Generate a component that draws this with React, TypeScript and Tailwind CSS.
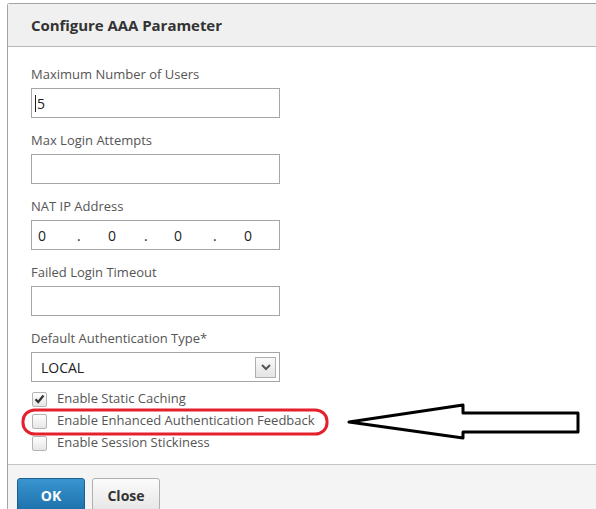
import React from 'react';

const font = { fontFamily: '"Open Sans", "Noto Sans", sans-serif' };

const Field: React.FC<{ label: string; children?: React.ReactNode; first?: boolean }> = ({ label, children, first }) => (
  <div className={first ? '' : 'mt-[12px]'}>
    <div className="h-[20px] leading-[20px] text-[13px] text-[#555]">{label}</div>
    <div className="mt-[4px] h-[30px] w-[249px] border border-[#a6a6a6] bg-white flex items-center text-[14px] text-[#222]">
      {children}
    </div>
  </div>
);

const CheckRow: React.FC<{ label: string; checked?: boolean }> = ({ label, checked }) => (
  <div className="flex items-center h-[22px]">
    <div className="ml-[1px] w-[15px] h-[15px] rounded-[2px] border border-[#b4b4b4] bg-gradient-to-b from-white to-[#e6e6e6] flex items-center justify-center">
      {checked && (
        <svg width="11" height="10" viewBox="0 0 11 10">
          <path d="M1.5 5.2 L4.2 8 L9.5 1.5" fill="none" stroke="#333" strokeWidth="2.2" />
        </svg>
      )}
    </div>
    <span className="ml-[10px] text-[13px] text-[#555]">{label}</span>
  </div>
);

export default function App() {
  return (
    <div className="relative w-[596px] h-[509px] overflow-hidden bg-white" style={font}>
      <div className="ml-[7px] mt-[3px] w-[620px] h-[540px] border-l border-t border-[#a3a3a3] rounded-tl-[3px] flex flex-col">
        {/* Header */}
        <div className="h-[43px] bg-[#f0f0f0] border-b border-[#b8b8b8] flex items-center pl-[23px]">
          <span className="text-[15px] font-bold tracking-[-0.05px] text-[#333]">Configure AAA Parameter</span>
        </div>

        {/* Body */}
        <div className="pl-[23px] pt-[17px] pb-[10px]">
          <Field label="Maximum Number of Users" first>
            <span className="ml-[3px] w-px h-[17px] bg-[#222]" />
            <span className="ml-[1px]">5</span>
          </Field>
          <Field label="Max Login Attempts" />
          <Field label="NAT IP Address">
            <span className="pl-[6px] w-[45px]">0</span>
            <span className="w-[31px]">.</span>
            <span className="w-[36px]">0</span>
            <span className="w-[30px]">.</span>
            <span className="w-[39px]">0</span>
            <span className="w-[31px]">.</span>
            <span>0</span>
          </Field>
          <Field label="Failed Login Timeout" />
          <Field label="Default Authentication Type*">
            <span className="ml-[9px] flex-1">LOCAL</span>
            <div className="mr-[3px] w-[21px] h-[21px] border border-[#b0b0b0] bg-gradient-to-b from-[#fafafa] to-[#e4e4e4] flex items-center justify-center">
              <svg width="10" height="7" viewBox="0 0 10 7">
                <path d="M1 1 L5 5 L9 1" fill="none" stroke="#555" strokeWidth="2" />
              </svg>
            </div>
          </Field>
          <div className="mt-[6px]">
            <CheckRow label="Enable Static Caching" checked />
            <CheckRow label="Enable Enhanced Authentication Feedback" />
            <CheckRow label="Enable Session Stickiness" />
          </div>
        </div>

        {/* Footer */}
        <div className="flex-1 border-t border-[#c4c4c4] bg-[#f4f4f4] pl-[9px] pt-[13px] flex gap-[7px] items-start">
          <button className="w-[68px] h-[34px] rounded-[3px] border border-[#1d5f8e] bg-gradient-to-b from-[#3a95d0] to-[#1c71ab] text-white text-[14px] font-bold">
            OK
          </button>
          <button className="w-[68px] h-[34px] rounded-[3px] border border-[#b0b0b0] bg-gradient-to-b from-[#fbfbfb] to-[#e6e6e6] text-[#333] text-[14px] font-bold">
            Close
          </button>
        </div>
      </div>

      {/* Annotation overlay */}
      <svg className="absolute left-0 top-0 pointer-events-none" width="596" height="509" viewBox="0 0 596 509">
        <rect x="23" y="410" width="304" height="24" rx="12" ry="11" fill="none" stroke="#e3202b" strokeWidth="3" />
        <polygon
          points="349,422 463,405 463,413 578,413 578,432 463,432 463,438"
          fill="white"
          stroke="black"
          strokeWidth="3"
          strokeLinejoin="round"
        />
      </svg>
    </div>
  );
}
